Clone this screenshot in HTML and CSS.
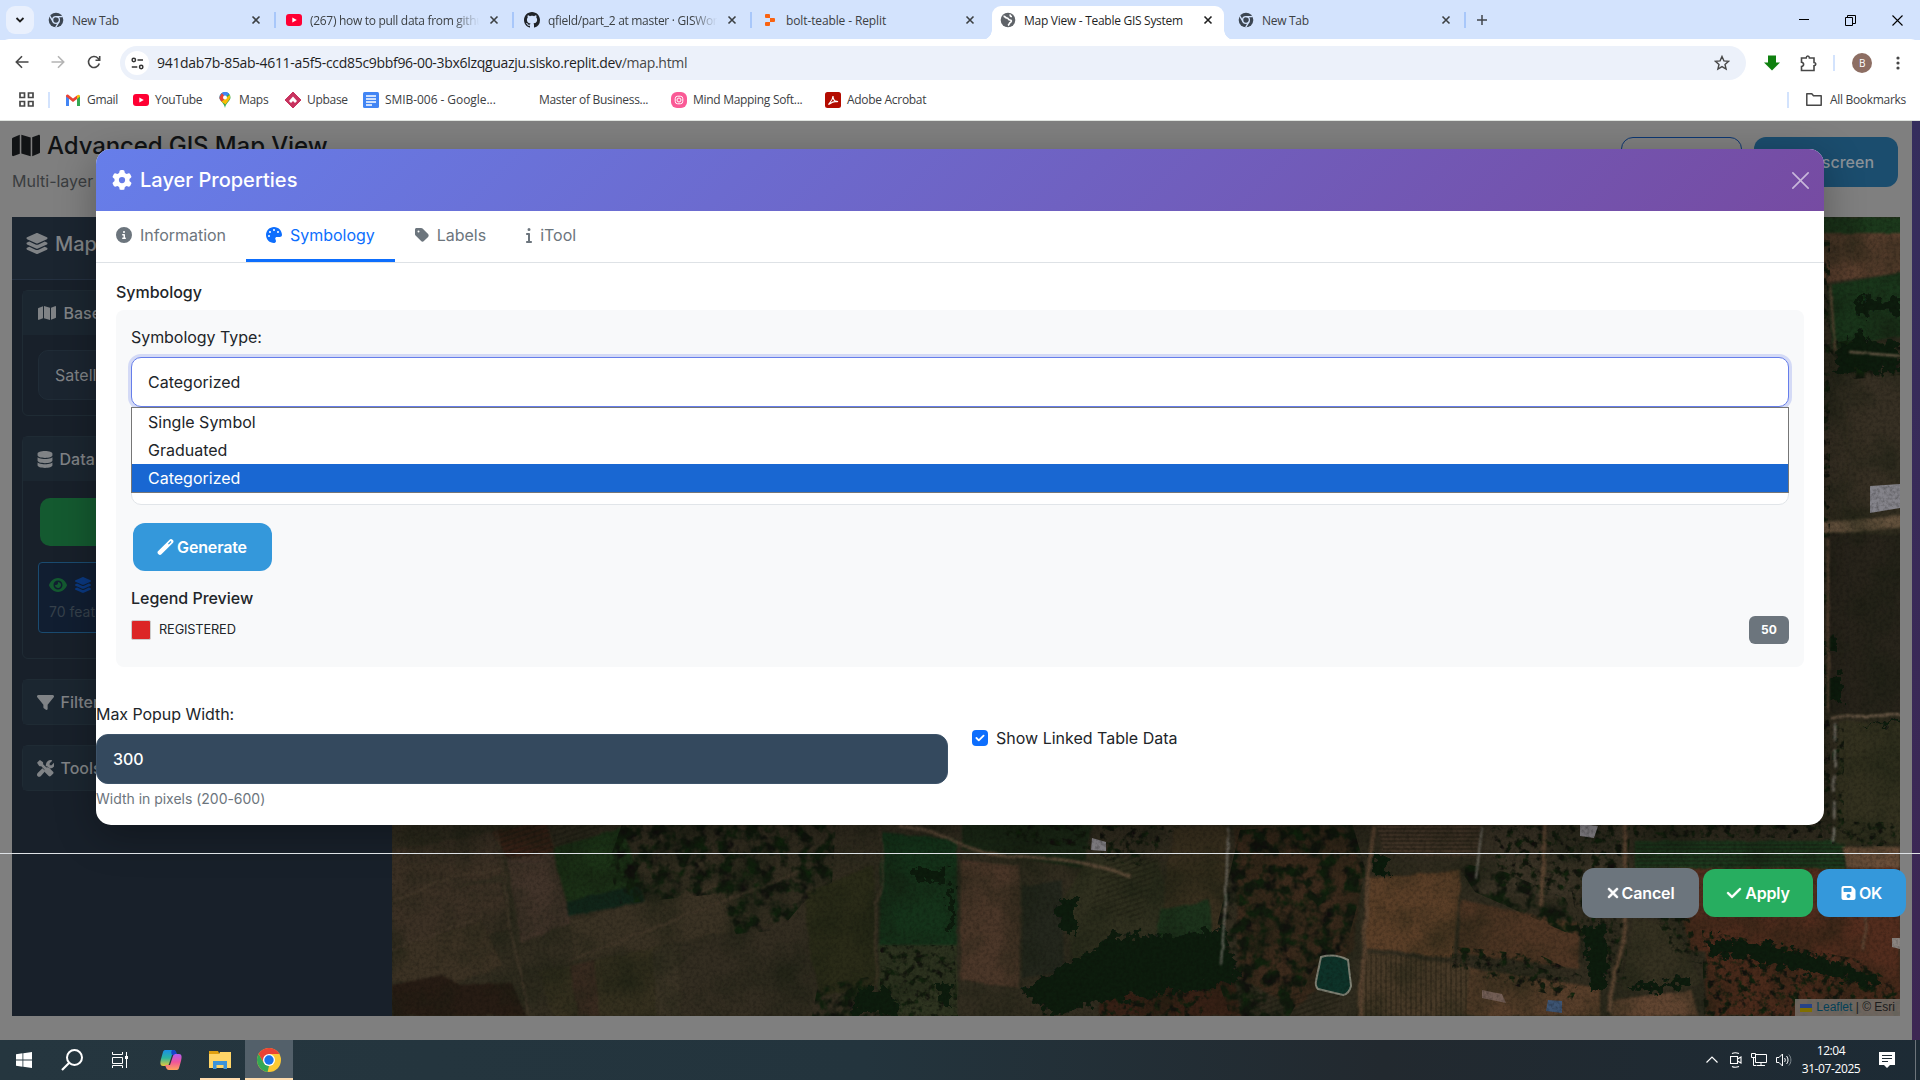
FILE: index.html
```html
<!DOCTYPE html>
<html lang="en">
<head>
<meta charset="utf-8">
<title>Map View - Teable GIS System</title>
<link rel="stylesheet" href="styles.css">
</head>
<body>
<svg width="0" height="0" class="defs" aria-hidden="true">
  <symbol id="i-layers" viewBox="0 0 576 512"><path d="M264.500 5.200c14.900-6.900 32.100-6.900 47 0l218.600 101c8.500 3.900 13.900 12.400 13.900 21.800s-5.400 17.900-13.900 21.800l-218.600 101c-14.900 6.900-32.100 6.900-47 0L45.900 149.800C37.400 145.800 32 137.300 32 128s5.400-17.900 13.900-21.800L264.500 5.200zM476.900 209.600l53.200 24.600c8.500 3.900 13.900 12.400 13.900 21.800s-5.400 17.900-13.900 21.800l-218.600 101c-14.900 6.900-32.100 6.900-47 0L45.900 277.800C37.400 273.800 32 265.300 32 256s5.400-17.900 13.900-21.800l53.200-24.600 152 70.200c23.400 10.800 50.400 10.800 73.800 0l152-70.200zm-152 198.200l152-70.200 53.200 24.600c8.500 3.900 13.900 12.400 13.900 21.800s-5.400 17.900-13.900 21.800l-218.600 101c-14.900 6.900-32.100 6.900-47 0L45.900 405.800C37.400 401.800 32 393.300 32 384s5.400-17.900 13.900-21.800l53.200-24.600 152 70.200c23.400 10.800 50.400 10.800 73.800 0z"/></symbol>
  <symbol id="i-map" viewBox="0 0 576 512"><path d="M384 476.100L192 421.200V35.900L384 90.800V476.100zm32-1.200V88.400L543.100 37.500c15.800-6.300 32.900 5.300 32.900 22.300V394.600c0 9.800-6 18.600-15.100 22.300L416 474.800zM15.100 95.100L160 37.200V423.600L32.900 474.500C17.100 480.800 0 469.200 0 452.200V117.400c0-9.800 6-18.600 15.100-22.300z"/></symbol>
  <symbol id="i-gear" viewBox="0 0 512 512"><path d="M495.900 166.600c3.200 8.700 .5 18.400-6.400 24.600l-43.300 39.400c1.100 8.300 1.700 16.800 1.700 25.400s-.6 17.100-1.700 25.400l43.300 39.400c6.900 6.200 9.600 15.900 6.400 24.600c-4.400 11.900-9.700 23.300-15.800 34.300l-4.700 8.100c-6.600 11-14 21.400-22.100 31.200c-5.900 7.200-15.700 9.600-24.500 6.800l-55.700-17.700c-13.400 10.300-28.200 18.900-44 25.400l-12.500 57.100c-2 9.100-9 16.300-18.200 17.800c-13.800 2.300-28 3.500-42.500 3.500s-28.700-1.200-42.500-3.500c-9.200-1.500-16.200-8.700-18.200-17.800l-12.500-57.100c-15.800-6.500-30.600-15.100-44-25.400L83.100 425.900c-8.800 2.800-18.600 .3-24.500-6.800c-8.100-9.800-15.500-20.200-22.100-31.200l-4.700-8.100c-6.100-11-11.400-22.400-15.800-34.300c-3.200-8.700-.5-18.400 6.400-24.600l43.300-39.400C64.600 273.100 64 264.600 64 256s.6-17.100 1.700-25.400L22.400 191.200c-6.900-6.200-9.600-15.900-6.400-24.600c4.400-11.900 9.700-23.300 15.800-34.300l4.700-8.100c6.600-11 14-21.400 22.100-31.200c5.900-7.200 15.700-9.600 24.500-6.800l55.700 17.700c13.400-10.300 28.200-18.900 44-25.400l12.500-57.100c2-9.100 9-16.300 18.200-17.800C227.300 1.200 241.500 0 256 0s28.700 1.200 42.500 3.500c9.200 1.500 16.200 8.700 18.200 17.800l12.500 57.100c15.800 6.500 30.600 15.100 44 25.400l55.700-17.700c8.800-2.800 18.600-.3 24.500 6.800c8.100 9.800 15.500 20.200 22.100 31.200l4.700 8.100c6.100 11 11.400 22.400 15.800 34.300zM256 336a80 80 0 1 0 0-160 80 80 0 1 0 0 160z"/></symbol>
  <symbol id="i-circle-info" viewBox="0 0 512 512"><path d="M256 512A256 256 0 1 0 256 0a256 256 0 1 0 0 512zM216 336h24V272H216c-13.300 0-24-10.700-24-24s10.700-24 24-24h48c13.300 0 24 10.700 24 24v88h8c13.300 0 24 10.700 24 24s-10.700 24-24 24H216c-13.300 0-24-10.700-24-24s10.700-24 24-24zm40-208a32 32 0 1 1 0 64 32 32 0 1 1 0-64z"/></symbol>
  <symbol id="i-palette" viewBox="0 0 512 512"><path d="M512 256c0 .9 0 1.800 0 2.700c-.4 36.500-33.600 61.300-70.100 61.300H344c-26.500 0-48 21.500-48 48c0 3.400 .4 6.700 1 9.900c2.100 10.200 6.500 20 10.800 29.900c6.100 13.800 12.100 27.500 12.100 42c0 31.800-21.600 60.700-53.400 62c-3.500 .1-7 .2-10.600 .2C114.600 512 0 397.400 0 256S114.600 0 256 0S512 114.600 512 256zM128 288a32 32 0 1 0 -64 0 32 32 0 1 0 64 0zm0-96a32 32 0 1 0 0-64 32 32 0 1 0 0 64zM288 96a32 32 0 1 0 -64 0 32 32 0 1 0 64 0zm96 96a32 32 0 1 0 0-64 32 32 0 1 0 0 64z"/></symbol>
  <symbol id="i-tag" viewBox="0 0 448 512"><path d="M0 80V229.500c0 17 6.700 33.300 18.700 45.300l176 176c25 25 65.500 25 90.500 0L418.700 317.300c25-25 25-65.500 0-90.500l-176-176c-12-12-28.300-18.700-45.300-18.700H48C21.500 32 0 53.500 0 80zm112 32a32 32 0 1 1 0 64 32 32 0 1 1 0-64z"/></symbol>
  <symbol id="i-info" viewBox="0 0 192 512"><path d="M48 80a48 48 0 1 1 96 0A48 48 0 1 1 48 80zM0 224c0-17.700 14.300-32 32-32H96c17.700 0 32 14.300 32 32V448h32c17.700 0 32 14.300 32 32s-14.300 32-32 32H32c-17.700 0-32-14.300-32-32s14.300-32 32-32H64V256H32c-17.700 0-32-14.300-32-32z"/></symbol>
  <symbol id="i-filter" viewBox="0 0 512 512"><path d="M3.900 54.900C10.500 40.900 24.500 32 40 32H472c15.500 0 29.500 8.900 36.100 22.900s4.600 30.500-5.200 42.500L320 320.900V448c0 12.100-6.800 23.200-17.700 28.600s-23.800 4.300-33.500-3l-64-48c-8.100-6-12.800-15.500-12.800-25.600V320.900L9 97.300C-.7 85.400-2.800 68.800 3.900 54.900z"/></symbol>
  <symbol id="i-database" viewBox="0 0 448 512"><path d="M448 80v48c0 44-100 80-224 80S0 172 0 128V80C0 36 100 0 224 0s224 36 224 80zM393 215c21-7.500 40-17 55-29v102c0 44-100 80-224 80S0 332 0 288V186c15 12 34 21.500 55 29 45 16 105 25 169 25s124-9 169-25zM0 346c15 12 34 21.500 55 29 45 16 105 25 169 25s124-9 169-25c21-7.500 40-17 55-29v86c0 44-100 80-224 80S0 476 0 432z"/></symbol>
  <symbol id="i-tools" viewBox="0 0 512 512"><path d="M79 5L13 71c-8 7-8 18-3 27l50 76c5 7 12 11 20 11h48l98 98c-15 29-10 65 14 89l113 113c17 17 44 17 61 0l71-71c17-17 17-44 0-61L372 240c-24-24-60-29-89-14l-98-98V80c0-8-4-16-11-20L98 10C92 3 85 2 79 5z"/><path d="M20 395l145-145 85 85-132 145c-70 70-160-20-98-85zM265 190c-15-100 65-210 180-184 14 3 13 15 7 22l-70 70v58h58l70-70c7-7 19-8 21 7 19 100-53 163-143 163l-33-30c-25-26-60-35-90-36z" /></symbol>
  <symbol id="i-eye" viewBox="0 0 576 512"><path d="M288 32c-81 0-146 37-193 80C48 156 17 208 3 244c-4 8-4 17 0 25 14 35 45 87 92 131 47 43 112 80 193 80s146-37 193-80c47-44 78-96 92-131 4-8 4-17 0-25-14-36-45-88-92-132-47-43-112-80-193-80zM144 256a144 144 0 1 1 288 0 144 144 0 1 1-288 0zm144-64c0 35-29 64-64 64-7 0-14-1-20-3-6-2-13 2-12 7 0 7 1 14 3 21 14 51 66 82 118 68s82-66 68-118c-11-41-48-70-89-71-6 0-9 6-7 12 2 6 3 13 3 20z"/></symbol>
  <symbol id="i-wand" viewBox="0 0 512 512"><path fill-rule="evenodd" d="M14 395L395 14c24-19 52-19 75 0l28 28c19 24 19 52 0 75L117 498c-24 19-52 19-75 0l-28-28c-19-24-19-52 0-75zM362 176L446 92l-26-26L336 150z"/></symbol>
  <symbol id="i-xmark" viewBox="0 0 384 512"><path stroke="currentColor" stroke-width="22" d="M342.600 150.600c12.500-12.500 12.500-32.800 0-45.300s-32.800-12.500-45.300 0L192 210.700 86.600 105.400c-12.500-12.500-32.800-12.500-45.300 0s-12.500 32.800 0 45.300L146.700 256 41.400 361.400c-12.500 12.500-12.500 32.800 0 45.300s32.800 12.500 45.300 0L192 301.300 297.400 406.600c12.500 12.500 32.800 12.500 45.300 0s12.500-32.800 0-45.300L237.300 256 342.600 150.600z"/></symbol>
  <symbol id="i-check" viewBox="0 0 448 512"><path stroke="currentColor" stroke-width="14" d="M438.600 105.400c12.500 12.500 12.500 32.800 0 45.300l-256 256c-12.500 12.500-32.800 12.500-45.300 0l-128-128c-12.500-12.500-12.500-32.800 0-45.300s32.800-12.500 45.300 0L160 338.700 393.400 105.400c12.500-12.500 32.800-12.500 45.300 0z"/></symbol>
  <symbol id="i-save" viewBox="0 0 448 512"><path d="M64 32C28.700 32 0 60.700 0 96V416c0 35.300 28.700 64 64 64H384c35.300 0 64-28.700 64-64V173.300c0-17-6.700-33.300-18.700-45.300L352 50.700C340 38.700 323.700 32 306.700 32H64zm0 96c0-17.700 14.300-32 32-32H288c17.700 0 32 14.300 32 32v64c0 17.700-14.300 32-32 32H96c-17.700 0-32-14.300-32-32V128zM224 288a64 64 0 1 1 0 128 64 64 0 1 1 0-128z"/></symbol>
  <symbol id="i-chrome-mono" viewBox="0 0 16 16"><circle cx="8" cy="8" r="7.300" fill="#3c4652"/><circle cx="8" cy="8" r="3.400" fill="none" stroke="#d3e3fd" stroke-width="1.300"/><path d="M8 4.600h6.800M5 9.600L1.700 3.900M11 9.700l-3.300 5.600" stroke="#d3e3fd" stroke-width="1.300"/></symbol>
  <symbol id="i-youtube" viewBox="0 0 16 12"><rect width="16" height="12" rx="3" fill="#ff0033"/><path d="M6.300 3.400v5.200L10.800 6z" fill="#fff"/></symbol>
  <symbol id="i-close" viewBox="0 0 10 10"><path d="M1.500 1.500l7 7M8.500 1.500l-7 7" stroke="currentColor" stroke-width="1.600"/></symbol>
</svg>

<header class="browser">
  <div class="tabstrip">
    <button class="tab-search"><svg width="10" height="10" viewBox="0 0 10 10"><path d="M1.500 3l3.500 3.500L8.500 3" fill="none" stroke="#1f1f1f" stroke-width="1.800"/></svg></button>
    <div class="tab"><svg width="16" height="16"><use href="#i-chrome-mono"/></svg><span class="tab-title">New Tab</span><svg class="x" width="10" height="10"><use href="#i-close"/></svg></div>
    <div class="tab"><svg width="16" height="12"><use href="#i-youtube"/></svg><span class="tab-title fade">(267) how to pull data from github</span><svg class="x" width="10" height="10"><use href="#i-close"/></svg></div>
    <div class="tab"><svg width="16" height="16" viewBox="0 0 16 16"><path fill="#1f2328" d="M8 0C3.580 0 0 3.580 0 8c0 3.540 2.290 6.530 5.470 7.590.4.070.55-.17.55-.38 0-.19-.01-.82-.01-1.490-2.010.37-2.530-.49-2.690-.94-.09-.23-.48-.94-.82-1.130-.28-.15-.68-.52-.01-.53.63-.01 1.080.58 1.230.82.72 1.210 1.870.87 2.330.66.07-.52.28-.87.51-1.070-1.780-.2-3.640-.89-3.640-3.950 0-.87.31-1.590.82-2.150-.08-.2-.36-1.020.08-2.120 0 0 .67-.21 2.200.82.64-.18 1.320-.27 2-.27s1.360.09 2 .27c1.530-1.040 2.200-.82 2.200-.82.44 1.100.16 1.920.08 2.120.51.56.82 1.270.82 2.150 0 3.070-1.870 3.750-3.650 3.950.29.25.54.73.54 1.480 0 1.070-.01 1.930-.01 2.200 0 .21.150.46.55.38A8.010 8.010 0 0 0 16 8c0-4.420-3.580-8-8-8z"/></svg><span class="tab-title fade">qfield/part_2 at master · GISWorld</span><svg class="x" width="10" height="10"><use href="#i-close"/></svg></div>
    <div class="tab narrow"><svg width="16" height="16" viewBox="0 0 16 16"><path fill="#fa6311" d="M3 3a1 1 0 0 1 1-1h3a1 1 0 0 1 1 1v3H4a1 1 0 0 1-1-1zM8 6h4a1 1 0 0 1 1 1v2a1 1 0 0 1-1 1H8zM3 11a1 1 0 0 1 1-1h4v3a1 1 0 0 1-1 1H4a1 1 0 0 1-1-1z"/></svg><span class="tab-title">bolt-teable - Replit</span><svg class="x" width="10" height="10"><use href="#i-close"/></svg></div>
    <div class="tab active"><svg width="16" height="16" viewBox="0 0 16 16"><circle cx="8" cy="8" r="7.300" fill="#5f6368"/><path d="M3.500 4.500c2-.3 2 1.500 3.500 1.500S8 8 10 8s1.500 2 .3 2.500-.8 2-2.300 3M10.500 2.500c-.8 1.200 0 2 1.500 2" fill="none" stroke="#fff" stroke-width="1.700"/></svg><span class="tab-title">Map View - Teable GIS System</span><svg class="x" width="10" height="10"><use href="#i-close"/></svg></div>
    <div class="tab"><svg width="16" height="16"><use href="#i-chrome-mono"/></svg><span class="tab-title">New Tab</span><svg class="x" width="10" height="10"><use href="#i-close"/></svg></div>
    <svg class="new-tab" width="12" height="12" viewBox="0 0 12 12"><path d="M6 1v10M1 6h10" stroke="#41464b" stroke-width="1.500"/></svg>
    <div class="window-controls">
      <svg width="10" height="10" viewBox="0 0 10 10"><path d="M0 4.500h10" stroke="#000"/></svg>
      <svg width="11" height="11" viewBox="0 0 11 11"><path d="M.5 2.500h7v8h-7zM2.500 2.500v-2h8v8h-3" fill="none" stroke="#000"/></svg>
      <svg width="11" height="11" viewBox="0 0 11 11"><path d="M.5.5l10 10M10.500.5l-10 10" stroke="#000" stroke-width="1.100"/></svg>
    </div>
  </div>
  <div class="toolbar">
    <div class="nav-icons">
      <svg width="14" height="14" viewBox="0 0 14 14"><path d="M13.500 7H1.500M7 1.200L1.300 7 7 12.800" fill="none" stroke="#474747" stroke-width="1.600"/></svg>
      <svg width="14" height="14" viewBox="0 0 14 14"><path d="M.5 7h12M7 1.200L12.700 7 7 12.800" fill="none" stroke="#b4b4b4" stroke-width="1.600"/></svg>
      <svg width="14" height="14" viewBox="0 0 14 14"><path d="M12.300 8.500A5.500 5.500 0 1 1 11 3.200l1.500 1.500M12.700 1v4.200H8.500" fill="none" stroke="#474747" stroke-width="1.600"/></svg>
    </div>
    <div class="omnibox">
      <span class="site-info"><svg width="13" height="13" viewBox="0 0 13 13"><g fill="none" stroke="#333" stroke-width="1.500"><circle cx="2.800" cy="3" r="1.700"/><path d="M6.500 3H12M.8 10h5.500"/><circle cx="10.200" cy="10" r="1.700"/></g></svg></span>
      <span class="url">941dab7b-85ab-4611-a5f5-ccd85c9bbf96-00-3bx6lzqguazju.sisko.replit.dev<span>/map.html</span></span>
      <svg class="star" width="16" height="16" viewBox="0 0 16 16"><path d="M8 1.500l1.900 4.400 4.700.4-3.600 3.100 1.100 4.600L8 11.600 3.900 14 5 9.400 1.400 6.300l4.700-.4z" fill="none" stroke="#474747" stroke-width="1.400"/></svg>
    </div>
    <div class="extensions">
      <svg width="16" height="16" viewBox="0 0 16 16"><path d="M4 .5h8v7h4l-8 8-8-8h4z" fill="#0f800f"/></svg>
      <svg class="puzzle" width="17" height="17" viewBox="0 0 17 17"><path d="M1.500 3h4.700c.2-2.600 3-2.600 3.200 0H14v4.500c2.400.2 2.400 3 0 3.200V15.500H1.500v-4c2.800-.3 2.800-4 0-4.300z" fill="none" stroke="#474747" stroke-width="1.600"/></svg>
      <i class="sep"></i>
      <span class="avatar">B</span>
      <svg class="kebab" width="4" height="16" viewBox="0 0 4 16"><g fill="#474747"><circle cx="2" cy="3" r="1.600"/><circle cx="2" cy="8" r="1.600"/><circle cx="2" cy="13" r="1.600"/></g></svg>
    </div>
  </div>
  <div class="bookmarks">
    <svg class="apps" width="15" height="15" viewBox="0 0 15 15"><path d="M1 1h4.500v4.500H1zM9.500 1H14v4.500H9.500zM1 9.500h4.500V14H1zM9.500 9.500H14V14H9.500z" fill="none" stroke="#474747" stroke-width="1.700"/></svg>
    <i class="sep"></i>
    <div class="bookmark-list">
      <a><svg width="16" height="12" viewBox="0 0 16 12"><path d="M1 1.500V12h3V4z" fill="#4285f4"/><path d="M15 1.500V12h-3V4z" fill="#34a853"/><path d="M1 2.500L8 8l4-3V1.500L8 4.500 3.300.8C2-.2.800 1 1 2.500z" fill="#ea4335"/><path d="M15 2.500L12 5V1.500c1.500-1.500 3-.5 3 1z" fill="#fbbc04"/></svg>Gmail</a>
      <a><svg width="16" height="12"><use href="#i-youtube"/></svg>YouTube</a>
      <a class="maps"><svg width="12" height="16" viewBox="0 0 12 16"><path d="M6 0a5.500 5.500 0 0 1 5.500 5.500C11.500 9 7 10.500 6 16 5 10.500.5 9 .5 5.500A5.500 5.500 0 0 1 6 0z" fill="#34a853"/><path d="M1.500 8.500L10 1.800A5.500 5.500 0 0 0 .5 5.500c0 1.200.4 2.200 1 3z" fill="#4285f4"/><path d="M.6 5L3 1 7 4.500 3 10C1.500 8.500.300 7 .6 5z" fill="#ea4335"/><path d="M2.500 9.700L10.800 3c1.500 4-2.800 6.300-4 9.500z" fill="#fbbc04"/><path d="M3 1C5 -.5 8.500-.3 10 1.800L6 5z" fill="#4285f4"/><circle cx="6" cy="5.500" r="2" fill="#fff"/></svg>Maps</a>
      <a><svg width="16" height="16" viewBox="0 0 16 16"><path d="M8 0l8 8-8 8-8-8z" fill="#c8335f" stroke="#c8335f" stroke-linejoin="round"/><path d="M4 9l4-4.500L12 9l-2 2-2-2-2 2z" fill="#fff"/></svg>Upbase</a>
      <a class="wide"><svg width="16" height="16" viewBox="0 0 16 16"><rect width="16" height="16" rx="1.500" fill="#4285f4"/><path d="M3 4h10M3 7h10M3 10h10M3 13h6" stroke="#fff" stroke-width="1.400"/></svg>SMIB-006 - Google...</a>
      <a class="no-icon">Master of Business...</a>
      <a><svg width="16" height="16" viewBox="0 0 16 16"><rect width="16" height="16" rx="6" fill="#fa5a96"/><g fill="none" stroke="#fff" stroke-width="1"><rect x="4.200" y="4.200" width="7.600" height="7.600" rx="2.500"/><circle cx="8" cy="8" r="2"/></g></svg>Mind Mapping Soft...</a>
      <a><svg width="16" height="16" viewBox="0 0 16 16"><rect width="16" height="16" rx="2.500" fill="#b30b00"/><path d="M3.500 12.500c1-2 4.500-4 4.500-8.500 0 4 2 6 5 5.500-3.500-.8-6 .5-9.500 3z" fill="none" stroke="#fff" stroke-width="1.100"/></svg>Adobe Acrobat</a>
    </div>
    <div class="all-bookmarks"><i class="sep"></i><svg width="16" height="13" viewBox="0 0 16 13"><path d="M.8 12.200V.8h5l1.700 2h7.700v9.400z" fill="none" stroke="#474747" stroke-width="1.500" stroke-linejoin="round"/></svg>All Bookmarks</div>
  </div>
</header>

<main class="page">
  <div class="page-body">
    <div class="page-head">
      <div>
        <h1><svg width="28" height="25"><use href="#i-map"/></svg>Advanced GIS Map View</h1>
        <p>Multi-layer</p>
      </div>
      <div class="head-actions"><span class="btn-outline"></span><span class="btn-full">Full screen</span></div>
    </div>
    <div class="workspace">
      <aside class="sidebar">
        <div class="side-title"><svg width="24" height="21"><use href="#i-layers"/></svg>Map Layers</div>
        <section class="card"><h3><svg width="20" height="16"><use href="#i-map"/></svg>Base Maps</h3><div class="card-body base"><div class="dark-select">Satellite</div></div></section>
        <section class="card data"><h3><svg width="16" height="17"><use href="#i-database"/></svg>Data Sources</h3><div class="card-body"><div class="green-btn"></div><div class="layer-item"><div><svg class="eye" width="18" height="16"><use href="#i-eye"/></svg><svg class="lay" width="18" height="16"><use href="#i-layers"/></svg></div><p>70 features</p></div></div></section>
        <section class="card"><h3><svg width="17" height="17"><use href="#i-filter"/></svg>Filters</h3></section>
        <section class="card"><h3><svg width="17" height="17"><use href="#i-tools"/></svg>Tools</h3></section>
      </aside>
      <div class="map">
        <svg class="imagery" viewBox="392 217 1508 799" width="1508" height="799">
          <defs>
            <filter id="grain" x="0" y="0" width="100%" height="100%" color-interpolation-filters="sRGB"><feTurbulence type="fractalNoise" baseFrequency=".3" numOctaves="3" seed="4"/><feColorMatrix values="0 0 0 0 .03  0 0 0 0 .03  0 0 0 0 .02  1.600 0 0 0 -.62"/></filter>
            <filter id="patchy" x="0" y="0" width="100%" height="100%" color-interpolation-filters="sRGB"><feTurbulence type="fractalNoise" baseFrequency=".022" numOctaves="4" seed="9"/><feColorMatrix values="0 0 0 0 .08  0 0 0 0 .11  0 0 0 0 .06  0 2.200 0 0 -.9"/></filter>
            <filter id="canopy" x="0" y="0" width="100%" height="100%" color-interpolation-filters="sRGB"><feTurbulence type="fractalNoise" baseFrequency=".075" numOctaves="3" seed="12"/><feColorMatrix values="0 0 0 0 .065  0 .14 0 0 .03  0 0 0 0 .05  4.500 0 0 0 -1.800"/></filter>
            <filter id="scrub" x="0" y="0" width="100%" height="100%" color-interpolation-filters="sRGB"><feTurbulence type="fractalNoise" baseFrequency=".13" numOctaves="3" seed="31"/><feColorMatrix values="0 0 0 0 .07  0 .14 0 0 .03  0 0 0 0 .05  5 0 0 0 -2.400"/></filter>
            <filter id="rough" x="-5%" y="-5%" width="110%" height="110%"><feTurbulence type="fractalNoise" baseFrequency=".11" numOctaves="3" seed="2" result="n"/><feDisplacementMap in="SourceGraphic" in2="n" scale="22" xChannelSelector="R" yChannelSelector="G"/><feGaussianBlur stdDeviation=".7"/></filter>
            <filter id="soft" x="-2%" y="-2%" width="104%" height="104%" color-interpolation-filters="sRGB"><feTurbulence type="fractalNoise" baseFrequency=".05" numOctaves="2" result="n"/><feDisplacementMap in="SourceGraphic" in2="n" scale="4"/><feGaussianBlur stdDeviation=".8"/></filter>
            <pattern id="rows" width="4" height="4" patternUnits="userSpaceOnUse"><path d="M0 1h4" stroke="#1c1b10" stroke-width="1.200"/></pattern>
            <pattern id="cols" width="5" height="5" patternUnits="userSpaceOnUse"><path d="M1 0v5" stroke="#1c1b10" stroke-width="1"/></pattern>
            <pattern id="furrows" width="5" height="5" patternUnits="userSpaceOnUse" patternTransform="rotate(-18)"><path d="M0 1h5" stroke="#1d1b10" stroke-width="1.300"/></pattern>
            <clipPath id="orchards"><path d="M622 824h214l-4 58-30 22-22 26-44 4-20-40-96 10-12-40zM1240 830l112-8 14 50-20 76-32 20-24 48h-60l-20-60zM818 985l50-8 34 39h-90zM1455 862l50 10 60 26 20 40-20-6-90-40zM1824 345l30-6 46 8v28l-46 4z"/></clipPath>
            <clipPath id="scrubland"><path d="M1452 946l90 10 40 20-10 24-120-30zM1702 930l160 30 38 30v26h-196zM1560 824h70l-4 160-40-10zM1490 826h130v70l-120-10zM1632 820l268 2-2 16h-264zM1000 824h90v26l-80-10zM1654 914h34l14 50-26-6zM1100 826h80l-40 40-40-6zM1824 240h6v600h-6zM1832 724h12v120h-12zM1850 838h50v8h-50zM1100 960l120 20-20 36h-100zM880 945h74l4 71h-78z"/></clipPath>
          </defs>
          <rect x="392" y="217" width="1508" height="799" fill="#322d20"/>
          <g filter="url(#soft)">
            <path fill="#3c3125" d="M392 850l103-18 8 42-111 28zM392 905l35-15 75-8 8 45-55 18-63 20z"/>
            <path fill="#3c3224" d="M392 950l90-30 20 45-50 20-60-5z"/><path fill="#271c14" d="M392 985l50-10 18 10 52-2 14 33H392z"/>
            <path fill="#3b2318" d="M493 832l53-10 9 30-48 6z"/>
            <path fill="#42342a" d="M508 860l45-9 18 72-50 20z"/>
            <path fill="#1d3518" d="M552 848l72-20 16 56-73 18z"/><path fill="#11261a" d="M567 902l72-18 6 18-78 14z"/>
            <path fill="#3a3224" d="M570 920l160-40 30 45-120 25-65 10z"/><path fill="#35301f" d="M540 972l120-26 26 70H552z"/>
            <path fill="#392b20" d="M570 966l24-6 6 56h-22z"/><path fill="#3a3325" d="M652 950l24-6 6 72h-26z"/>
            <path fill="#332d21" d="M682 945l125-30 14 101H680z"/>
            <path fill="#2a2b18" d="M805 893l68-28 5 120-56 12-12-40z"/>
            <path fill="#15331a" d="M882 832l75 8v105h-78z"/><path fill="#2e3420" d="M879 945h78v71h-78z"/>
            <path fill="#4b3729" d="M961 860l59 6-1 122-58-8z"/><path fill="#24271d" d="M1022 886l40-6 2 92-42 6z"/>
            <path fill="#1b2816" d="M962 822l130 2-8 44-122-18z"/>
            <path fill="#30301f" d="M1090 855l68 5 10 40-15 70-80-10-10-60z"/>
            <path fill="#39301f" d="M1174 828l54-3-8 140-60 8 5-90z"/>
            <path fill="#1c321b" d="M1160 910l50-10 4 60-60 5z"/>
            <path fill="#362015" d="M1100 1000l130-35 12 51h-142z"/>
            <path fill="#3b2a1c" d="M1235 828h108l20 40-10 80-55 60-60-30z"/>
            <path fill="#46382a" d="M1376 823h106l-6 34-92-4z"/>
            <path fill="#5b3f28" d="M1367 878l94-7-8 87-89-10z"/><path fill="#4f3624" d="M1461 900l119 24-2 44-120-15z"/>
            <path fill="#483a28" d="M1364 952l106 14-2 50h-112z"/><path fill="#573e2a" d="M1470 968l130 20v28h-135z"/>
            <path fill="#3a3326" d="M1485 825h140v75l-145-5z"/><path fill="#353121" d="M1634 920l40 5 28 60-80 6z"/>
            <path fill="#614531" d="M1612 1000l80-10 6 26h-88z"/>
            <path fill="#1d3a1e" d="M1635 841h210v30l-210-4z"/><path fill="#6b4f3a" d="M1843 847h57v26h-52z"/>
            <path fill="#532d1e" d="M1672 868h228v120l-60-25-150-13z"/><path fill="#4a2a1b" d="M1706 950l194 30v36h-194z"/>
            <path fill="#1c391c" d="M1820 217h86v16h-86z"/><path fill="#5a3f2e" d="M1820 233h86v39l-86 11z"/><path fill="#1a361b" d="M1828 285l78-13v62l-74 16z"/>
            <path fill="#373024" d="M1820 375h86v134h-86z"/><path fill="#67543f" d="M1820 522l86-6v10l-86 8z"/><path fill="#28241b" d="M1828 534h78v180h-78z"/><path fill="#343220" d="M1838 722h68v122h-70z"/>
          </g>
          <g fill="url(#rows)" opacity=".55"><path d="M1376 823h106l-6 34-92-4zM1637 843h208v24h-208z"/><path d="M1364 955h106l-2 61h-112z" fill="url(#cols)"/><path d="M493 832l53-10 9 30-48 6zM550 825l70-3-65 27z" fill="url(#furrows)"/><path d="M1110 850l50 10-20 60-50-10zM1240 990l100 5-4 21h-106z" fill="url(#furrows)"/></g>
          <rect x="392" y="217" width="1508" height="799" filter="url(#patchy)" opacity=".5"/>
          <g clip-path="url(#orchards)"><rect x="392" y="217" width="1508" height="799" filter="url(#canopy)"/></g>
          <g clip-path="url(#scrubland)"><rect x="392" y="217" width="1508" height="799" filter="url(#scrub)"/></g>
          <g filter="url(#rough)" fill="#101a11">
            <path d="M1022 990l60-34 30-22 60 2 50-8 20 50-30 10-50 5-60 10-50 13zM1056 898h20v36h-16zM914 868h32v14h-32zM948 886h6v40h-6zM858 990h30l14 26h-54zM940 985h10v20h-10z"/>
            <path d="M1702 938l60 4 60 14 50 20 10 12-80-18-90-16zM1584 925l18-2 6 60-16 10zM1630 985l60-6v8l-58 4zM1838 346l22-12 18 10 22-2v32l-36-4-30 6z"/>
            <path d="M1824 642l14-4v14l-14 2zM1824 672l16 4v24l-16 6zM1852 726l48-6v4zM1372 854l16 4v18l-14-2zM1856 300l44-2v14l-40 2z"/>
          </g>
          <g fill="none" stroke-linecap="round" filter="url(#soft)">
            <path d="M497 830l8 50 5 50 15 60 3 26M880 828l4 50-8 25v80M392 902l60-25 50-9M392 950l90-34M570 960l130-50 100-38" stroke="#463a2c" stroke-width="1.500"/>
            <path d="M900 826c60 8 60 28 110 30s80 6 120 20" stroke="#5c4a38" stroke-width="3"/><path d="M1228 828l-2 70-5 66M1482 828l-6 50" stroke="#8a857c" stroke-width="1.500"/>
            <path d="M1374 828l-6 50-8 138M1625 820v80c4 50-12 60-16 110M1545 825l-4 80" stroke="#594431" stroke-width="4"/><path d="M1868 870l-4 80M1830 285l5 65M1828 540v170" stroke="#5c4735" stroke-width="2.500"/>
            <path d="M1835 724l-1 118" stroke="#8c877e" stroke-width="2" stroke-dasharray="16 10"/><path d="M1830 717l70-2M1850 352l50 4" stroke="#7a6552" stroke-width="2"/>
          </g>
          <path d="M1321 957q14-4 27 3l3 26q-2 8-8 9l-25-6q-3-3-2-8z" fill="#0e3329" stroke="#7f8174" stroke-width="2"/>
          <g><path fill="#84838a" d="M1870 486l30-2v24l-30 5z"/><path fill="#88858a" d="M1092 838l14 4v9l-15-1zM1580 824l18 2-4 12-14-2z"/><path fill="#3d5473" d="M1548 1000l14 1v12l-16-2z"/><path fill="#735e55" d="M1482 990l20 4 4 9-24-5z"/><path fill="#8b8480" d="M1892 938h8v11l-8-2z"/></g>
          <rect x="392" y="217" width="1508" height="799" filter="url(#grain)" opacity=".35"/>
        </svg>
        <div class="attribution"><svg width="12" height="8" viewBox="0 0 12 8"><path fill="#264386" d="M0 0h12v4H0z"/><path fill="#806f00" d="M0 4h12v4H0z"/></svg><b>Leaflet</b>&nbsp;| © Esri</div>
      </div>
    </div>
  </div>
  <div class="scrollbar"></div>

  <div class="modal">
    <div class="modal-head"><svg width="20" height="20"><use href="#i-gear"/></svg><h2>Layer Properties</h2><svg class="modal-close" width="17" height="17" viewBox="0 0 16 16"><path d="M.8.8l14.400 14.400M15.200.8L.8 15.200" stroke="#fff" stroke-width="1.500" stroke-linecap="round"/></svg></div>
    <nav class="modal-tabs">
      <a><svg width="16" height="16"><use href="#i-circle-info"/></svg>Information</a>
      <a class="on"><svg width="16" height="16"><use href="#i-palette"/></svg>Symbology</a>
      <a><svg width="14" height="16"><use href="#i-tag"/></svg>Labels</a>
      <a><svg width="6" height="16"><use href="#i-info"/></svg>iTool</a>
    </nav>
    <div class="modal-body">
      <h4>Symbology</h4>
      <div class="panel">
        <label>Symbology Type:</label>
        <div class="select focused">Categorized
          <ul class="options"><li>Single Symbol</li><li>Graduated</li><li class="picked">Categorized</li></ul>
        </div>
        <div class="select second"></div>
        <button class="btn blue generate"><svg width="17" height="16"><use href="#i-wand"/></svg>Generate</button>
        <h4 class="legend-title">Legend Preview</h4>
        <div class="legend-row"><i class="swatch"></i><span>REGISTERED</span><b class="badge">50</b></div>
      </div>
    </div>
    <div class="popup-row">
      <div class="popup-col"><label>Max Popup Width:</label><div class="number">300</div><small>Width in pixels (200-600)</small></div>
      <div class="popup-col check"><span class="box"><svg width="12" height="12" viewBox="0 0 20 20"><path fill="none" stroke="#fff" stroke-linecap="round" stroke-linejoin="round" stroke-width="3" d="M4 10l4 4 8-8"/></svg></span>Show Linked Table Data</div>
    </div>
  </div>
  <div class="modal-foot">
    <button class="btn gray"><svg width="12" height="16"><use href="#i-xmark"/></svg>Cancel</button>
    <button class="btn green"><svg width="16" height="16"><use href="#i-check"/></svg>Apply</button>
    <button class="btn blue"><svg width="15" height="16"><use href="#i-save"/></svg>OK</button>
  </div>
</main>

<footer class="taskbar">
  <span class="task"><svg width="16" height="16" viewBox="0 0 16 16"><path fill="#fff" d="M0 2.200l6.500-.9v6.300H0zM7.300 1.200L16 0v7.600H7.300zM0 8.400h6.500v6.300L0 13.800zM7.300 8.400H16V16l-8.700-1.200z"/></svg></span>
  <span class="task"><svg width="22" height="22" viewBox="0 0 22 22"><circle cx="13.500" cy="8.500" r="7.500" fill="none" stroke="#fff" stroke-width="2"/><path d="M8 14l-7 7" stroke="#fff" stroke-width="2.200"/></svg></span>
  <span class="task"><svg width="16" height="16" viewBox="0 0 16 16"><path d="M.5 0v2.500h10V0M.5 5.500h10v6H.5zM.5 16v-2.500h10V16M14.500 0v16" fill="none" stroke="#fff"/><path fill="#fff" d="M13 4h3v3h-3z"/></svg></span>
  <span class="task copilot"><svg width="22" height="20" viewBox="0 0 22 20"><defs><linearGradient id="c1" x2="0" y2="1"><stop stop-color="#1a8fe8"/><stop offset=".5" stop-color="#2bb5a0"/><stop offset="1" stop-color="#e8c93a"/></linearGradient><linearGradient id="c2" x2="0" y2="1"><stop stop-color="#b35cf0"/><stop offset=".5" stop-color="#f0559a"/><stop offset="1" stop-color="#ffa45c"/></linearGradient></defs><path d="M5 0h8c2 0 3 2 4 5h-5L9 14c-.5 1.500-2 2-3 2H3c-3 0-3-3-2-7l2-7c.3-1 1-2 2-2z" fill="url(#c1)"/><path d="M12 0h2c1.500 0 2.500 2 3 5h-5c-1-1.500-1-4 0-5z" fill="#1746c8"/><path d="M17 20H9c-2 0-3-2-4-5h5l3-9c.5-1.500 2-2 3-2h3c3 0 3 3 2 7l-2 7c-.3 1-1 2-2 2z" fill="url(#c2)"/></svg></span>
  <span class="task open"><svg width="22" height="18" viewBox="0 0 22 18"><path fill="#e0a010" d="M0 0h9l1 2v2H0z"/><path fill="#ffd567" d="M0 3h10l1-2h11v16H0z"/><path fill="#3b93d9" d="M4 10h14v8h-3.500v-4h-7v4H4z"/></svg></span>
  <span class="task open current"><svg width="24" height="24" viewBox="0 0 24 24"><circle cx="12" cy="12" r="12" fill="#fcc934"/><path d="M1.600 6A12 12 0 0 1 22.400 6H12l-5.200 9z" fill="#ea4335"/><path d="M1.600 6l5.200 9L12 18l-1.500 5.900A12 12 0 0 1 1.600 6z" fill="#34a853"/><circle cx="12" cy="12" r="6" fill="#fff"/><circle cx="12" cy="12" r="4.700" fill="#1a73e8"/></svg></span>
  <div class="tray">
    <svg width="12" height="8" viewBox="0 0 12 8"><path d="M.5 6.500L6 1l5.500 5.500" fill="none" stroke="#fff" stroke-width="1.200"/></svg>
    <svg class="meet" width="12" height="16" viewBox="0 0 12 16"><path d="M.5 4.500h7v7h-7zM7.500 7l3.500-2v6L7.500 9M2 1.500c2-1 4.500-1 7 0M2 14.500c2 1 4.500 1 7 0" fill="none" stroke="#fff" stroke-width="1.100"/></svg>
    <svg width="16" height="14" viewBox="0 0 16 14"><path d="M4.500 1.500h11v8h-11zM10 9.500v3M6 12.500h8M.5.5h4v4h-4zM2.500 4.500v8h3" fill="none" stroke="#fff"/></svg>
    <svg width="16" height="14" viewBox="0 0 16 14"><path d="M.5 4.500h2.500l3.500-3.500v12L3 9.500H.5zM8.500 5c1 1.200 1 3 0 4M10.500 3c2 2.400 2 5.800 0 8" fill="none" stroke="#fff"/><path d="M12.800 1.500c2.800 3.200 2.800 8 0 11" fill="none" stroke="#808a90"/></svg>
    <div class="clock"><span>12:04</span><span>31-07-2025</span></div>
    <svg class="note" width="16" height="16" viewBox="0 0 16 16"><path fill="#fff" d="M0 0h16v13h-5l-3 3-3-3H0z"/><path d="M3 3.500h10M3 6.500h10M3 9.500h6" stroke="#1f2c35"/></svg>
    <i class="peek"></i>
  </div>
</footer>
</body>
</html>
```
FILE: styles.css
```css
* { box-sizing: border-box; }
body { margin: 0; width: 1920px; height: 1080px; overflow: hidden; display: flex; flex-direction: column; font: 16px/1.5 Inter, sans-serif; color: #212529; }
h1, h2, h3, h4, p, ul { margin: 0; padding: 0; font-weight: 500; }
button { border: 0; padding: 0; font: inherit; }
svg { flex: none; display: block; fill: currentColor; }
.defs { position: absolute; }
i, b { font-style: normal; }

/* Browser chrome */
.browser { height: 121px; flex: none; background: #fff; border-bottom: 1px solid #dfe3df; font: 12px/16px "Open Sans", sans-serif; color: #3c4043; letter-spacing: -0.3px; }
.tabstrip { height: 40px; background: #d3e3fd; display: flex; align-items: center; }
.tab-search { width: 28px; height: 28px; margin: 0 4px 0 6px; border-radius: 9px; background: #e9f0fd; display: flex; align-items: center; justify-content: center; }
.tab { width: 238px; height: 34px; padding: 0 15px 0 10px; display: flex; align-items: center; gap: 8px; position: relative; }
.tab:not(.active)::after { content: ""; position: absolute; right: 0; top: 9px; width: 2px; height: 16px; background: #a8c7fa; }
.tab:nth-child(5)::after { display: none; }
.tab-title { flex: 1; white-space: nowrap; overflow: hidden; padding-top: 1px; }
.tab-title.fade { -webkit-mask-image: linear-gradient(90deg, #000 84%, transparent 99%); mask-image: linear-gradient(90deg, #000 84%, transparent 99%); }
.tab.active { color: #1f1f1f; height: 34px; margin: 6px 4px 0 2px; width: 232px; padding: 0 11px 6px 8px; background: #fff; border-radius: 9px 9px 0 0; }
.tab.active .tab-title { letter-spacing: -0.28px; }
.tab.narrow .tab-title { letter-spacing: -0.12px; }
.tab.active::before { content: ""; position: absolute; left: -10px; right: -10px; bottom: 0; height: 10px; background: radial-gradient(circle at 0 0, transparent 9.500px, #fff 10px) left / 10px 10px no-repeat, radial-gradient(circle at 100% 0, transparent 9.500px, #fff 10px) right / 10px 10px no-repeat; }
.new-tab { margin-left: 10px; }
.window-controls { margin-left: auto; display: flex; gap: 36px; padding-right: 17px; }
.toolbar { height: 46px; background: #fff; margin-top: -1px; border-radius: 9px 9px 0 0; display: flex; align-items: center; }
.nav-icons { width: 120px; padding-left: 15px; display: flex; gap: 22px; }
.omnibox { width: 1626px; height: 34px; background: #ecf1fa; border-radius: 17px; display: flex; align-items: center; padding: 0 16px 0 5px; margin-top: 2px; }
.site-info { width: 24px; height: 24px; border-radius: 50%; background: #fff; display: flex; align-items: center; justify-content: center; }
.url { margin-left: 8px; font-size: 14px; letter-spacing: -0.31px; color: #1f1f1f; flex: 1; }
.url span { color: #474747; }
.extensions { flex: 1; display: flex; align-items: center; padding: 2px 0 0 18px; }
.puzzle { margin: 0 16px 0 20px; }
.sep { width: 2px; height: 16px; background: #d3e3fd; }
.avatar { width: 20px; height: 20px; margin: 0 24px 0 17px; border-radius: 50%; background: #8d6e63; color: #fff; font: 10px/20px "Open Sans", sans-serif; text-align: center; }
.bookmarks { height: 35px; display: flex; align-items: center; padding: 0 14px 0 19px; margin-top: -3px; }
.bookmarks > .sep { margin: 0 15px 0 14px; }
.bookmark-list { display: grid; grid-template-columns: 68px 86px 66px 78px 158px 150px 154px 120px; white-space: nowrap; }
.bookmark-list a { display: flex; align-items: center; gap: 6px; }
.bookmark-list .no-icon { padding-left: 18px; }
.bookmark-list .wide { letter-spacing: -0.06px; }
.bookmark-list .maps { gap: 8px; }
.all-bookmarks { margin-left: auto; display: flex; align-items: center; gap: 8px; }
.all-bookmarks .sep { margin-right: 9px; }

/* Page beneath the dialog */
.page { height: 919px; flex: none; position: relative; overflow: hidden; background: #7f7f7f; display: flex; }
.page-body { width: 1912px; padding: 16px 12px 0; }
.scrollbar { width: 8px; background: linear-gradient(#352d5d, #3d2653); }
.page-head { height: 80px; display: flex; justify-content: space-between; margin-right: 2px; }
.page-head h1 { font-size: 24px; line-height: 18px; letter-spacing: -0.1px; margin-top: -4px; color: #111315; display: flex; align-items: center; gap: 7px; }
.page-head p { font-size: 16px; font-weight: 400; color: #3a3d40; margin-top: 11px; }
.head-actions { display: flex; gap: 12px; }
.btn-outline { width: 121px; height: 50px; border: 1px solid #0c3773; border-radius: 12px; }
.btn-full { width: 144px; height: 50px; border-radius: 12px; background: #1b4d6e; color: #8a9299; font-weight: 500; line-height: 50px; text-align: right; padding-right: 24px; }
.workspace { display: flex; height: 799px; }
.sidebar { width: 380px; background: #18202a; color: #808386; padding: 0 10px; }
.side-title { height: 63px; margin: 0 -10px 10px; padding: 0 13px 9px; background: #1b2530; border-bottom: 1px solid #243040; display: flex; align-items: center; gap: 6px; font-size: 20px; font-weight: 500; }
.card { border: 1px solid #1f2b34; border-radius: 6px; margin-bottom: 20px; }
.card h3 { height: 44px; background: #1b2630; display: flex; align-items: center; gap: 6px; padding: 0 14px; font-size: 16px; }
.card h3 svg { margin-right: .5px; }
.card-body { padding: 15px; }
.dark-select { height: 50px; border: 1px solid #202c37; border-radius: 10px; background: #1b2530; padding-left: 16px; line-height: 49px; }
.data .card-body { height: 177px; padding-top: 17px; }
.green-btn { height: 48px; margin-left: 2px; border-radius: 10px; background: #145a30; }
.layer-item { margin-top: 16px; height: 71px; border: 1px solid #1a4b70; border-radius: 4px; background: #111e31; padding: 14px 10px; }
.layer-item div { display: flex; gap: 7px; }
.layer-item .eye { color: #145a30; }
.layer-item .lay { color: #0a387f; }
.layer-item p { font-size: 14px; font-weight: 400; color: #36414b; margin-top: 8px; }
.map { flex: 1; position: relative; }
.attribution { position: absolute; right: 0; bottom: 0; height: 17px; padding: 0 5px; background: rgba(118, 112, 106, .85); display: flex; align-items: center; font: 12px/17px "Liberation Sans", Arial, sans-serif; color: #1c1c1c; }
.attribution b { color: #044058; font-weight: 400; margin-left: 4px; }

/* Layer properties dialog */
.modal { position: absolute; left: 96px; top: 28px; width: 1728px; height: 676px; background: #fff; border-radius: 15px; box-shadow: 0 10px 40px rgba(0, 0, 0, .3); }
.modal-head { height: 62px; padding: 0 15.500px 0 16px; border-radius: 15px 15px 0 0; background: linear-gradient(135deg, #667eea, #764ba2); color: #fff; display: flex; align-items: center; gap: 8px; }
.modal-head h2 { font-size: 20px; flex: 1; letter-spacing: .02px; }
.modal-close { opacity: .6; }
.modal-tabs { height: 52px; border-bottom: 1px solid #dee2e6; display: flex; color: #6c757d; letter-spacing: -0.02px; }
.modal-tabs a { padding: 0 20px; height: 51px; display: flex; align-items: center; gap: 8px; border-bottom: 3px solid transparent; }
.modal-tabs .on { color: #0d6efd; border-color: #0d6efd; }
.modal-body { padding: 20px; }
h4 { font-size: 16px; line-height: 19px; letter-spacing: -0.02px; }
.panel { margin: 8px 0 0; height: 357px; padding: 15px; background: #f8f9fa; border-radius: 8px; }
.panel label, .popup-col label { display: block; line-height: 24px; letter-spacing: -0.05px; }
.select { height: 50px; border: 1px solid #e1e5e9; border-radius: 10px; background: #fff; padding: 0 16px; line-height: 48px; position: relative; }
.focused { margin-top: 8px; border-color: #667eea; box-shadow: 0 0 0 3px rgba(102, 126, 234, .25); }
.options { position: absolute; z-index: 2; left: -1px; right: -1px; top: 49px; list-style: none; border: 1px solid #767676; background: #fff; color: #212529; }
.options li { height: 28px; line-height: 29px; padding-left: 16px; font-weight: 400; }
.options .picked { background: #1967d2; color: #fff; }
.second { margin-top: 48px; }
.btn { border-radius: 12px; height: 48px; color: #fff; font-weight: 600; display: flex; align-items: center; justify-content: center; gap: 3px; letter-spacing: -0.15px; }
.blue { background: #3498db; }
.green { background: #27ae60; }
.gray { background: #6c757d; }
.generate { width: 139px; margin: 18px 0 0 2px; padding-right: 1px; }
.legend-title { margin-top: 18px; }
.legend-row { height: 28px; margin-top: 8px; display: flex; align-items: center; font-size: 12.800px; letter-spacing: -0.15px; }
.legend-row span { margin-top: -1px; }
.swatch { width: 20px; height: 20px; background: #dc2626; border: 1px solid #ccc; border-radius: 2px; margin-right: 8px; }
.badge { margin-left: auto; width: 40px; height: 28px; border-radius: 6px; background: #6c757d; color: #fff; font-size: 12px; line-height: 28px; text-align: center; letter-spacing: .2px; }
.popup-row { display: flex; gap: 24px; margin-top: 15px; }
.popup-col { width: 852px; }
.number { margin-top: 8px; height: 50px; border: 1px solid #3d5369; border-radius: 12px; background: #34495e; color: #fff; font-weight: 500; line-height: 48px; padding-left: 16px; }
.popup-col small { display: block; margin-top: 4px; font-size: 14px; letter-spacing: -0.02px; color: #6c757d; line-height: 21px; }
.check { display: flex; align-items: center; height: 24px; margin-top: 24px; gap: 8px; }
.box { width: 16px; height: 16px; border-radius: 4px; background: #0d6efd; display: flex; align-items: center; justify-content: center; }
.modal-foot { position: absolute; left: 0; right: 0; top: 732px; border-top: 1px solid #dee2e6; display: flex; justify-content: flex-end; align-items: center; gap: 4px; padding: 14px 14px 0; }
.modal-foot .gray { width: 117px; height: 50px; }
.modal-foot .green { width: 110px; }
.modal-foot .blue { width: 89px; }

/* Taskbar */
.taskbar { height: 40px; flex: none; background: linear-gradient(90deg, #25363f, #23343d 45%, #22292f 72%, #1d2b35); display: flex; color: #fff; }
.task { width: 48px; height: 40px; display: flex; align-items: center; justify-content: center; position: relative; }
.task:nth-child(4) { width: 54px; }
.task:nth-child(5) { width: 43px; }
.task.open::after { content: ""; position: absolute; left: 2px; right: 1px; bottom: 0; height: 2px; background: #ffdcae; }
.task.current { margin-left: 4px; background: #53606a; }
.task.current::after { left: 0; right: 0; }
.tray { margin-left: auto; display: flex; align-items: center; gap: 9px; padding-right: 4px; }
.meet { margin-left: 3px; }
.clock { width: 60px; white-space: nowrap; display: flex; flex-direction: column; align-items: center; font: 12px/18px "Open Sans", sans-serif; letter-spacing: -0.4px; }
.note { margin-left: 9px; }
.peek { width: 1px; height: 40px; background: #6d757b; margin-left: 11px; }
```
